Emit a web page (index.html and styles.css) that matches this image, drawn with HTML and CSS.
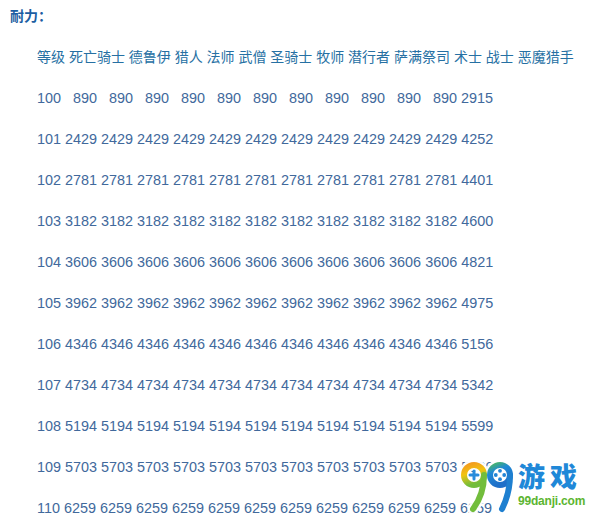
FILE: index.html
```html
<!DOCTYPE html>
<html lang="zh">
<head>
<meta charset="utf-8">
<link rel="stylesheet" href="styles.css">
</head>
<body>
<div class="page">
  <div class="title">耐力：</div>
  <div class="table">
    <div class="row head">等级 死亡骑士 德鲁伊 猎人 法师 武僧 圣骑士 牧师 潜行者 萨满祭司 术士 战士 恶魔猎手</div>
    <div class="row num">100   890   890   890   890   890   890   890   890   890   890   890 2915</div>
    <div class="row num">101 2429 2429 2429 2429 2429 2429 2429 2429 2429 2429 2429 4252</div>
    <div class="row num">102 2781 2781 2781 2781 2781 2781 2781 2781 2781 2781 2781 4401</div>
    <div class="row num">103 3182 3182 3182 3182 3182 3182 3182 3182 3182 3182 3182 4600</div>
    <div class="row num">104 3606 3606 3606 3606 3606 3606 3606 3606 3606 3606 3606 4821</div>
    <div class="row num">105 3962 3962 3962 3962 3962 3962 3962 3962 3962 3962 3962 4975</div>
    <div class="row num">106 4346 4346 4346 4346 4346 4346 4346 4346 4346 4346 4346 5156</div>
    <div class="row num">107 4734 4734 4734 4734 4734 4734 4734 4734 4734 4734 4734 5342</div>
    <div class="row num">108 5194 5194 5194 5194 5194 5194 5194 5194 5194 5194 5194 5599</div>
    <div class="row num">109 5703 5703 5703 5703 5703 5703 5703 5703 5703 5703 5703 5936</div>
    <div class="row num">110 6259 6259 6259 6259 6259 6259 6259 6259 6259 6259 6259 6259</div>
  </div>
  <div class="logo">
    <svg class="logo-mark" width="58" height="56" viewBox="0 0 58 56">
      <defs>
        <linearGradient id="g1" x1="0" y1="0" x2="0.3" y2="1">
          <stop offset="0" stop-color="#f39a1f"/>
          <stop offset="0.45" stop-color="#f2c40f"/>
          <stop offset="1" stop-color="#72bd3c"/>
        </linearGradient>
        <linearGradient id="g2" x1="0" y1="0" x2="0.4" y2="1">
          <stop offset="0" stop-color="#46b36c"/>
          <stop offset="0.35" stop-color="#1f8ad6"/>
          <stop offset="1" stop-color="#1e6fc8"/>
        </linearGradient>
      </defs>
      <g fill="none" stroke="#fff" stroke-width="11" stroke-linecap="round" opacity="0.95">
        <circle cx="15" cy="16" r="10"/>
        <path d="M25 16 C25 30 20 42 14 50"/>
        <circle cx="41" cy="16" r="10"/>
        <path d="M51 16 C51 30 47 42 43 50"/>
      </g>
      <g fill="none" stroke-width="6" stroke-linecap="round">
        <circle cx="15" cy="16" r="10" stroke="url(#g1)"/>
        <path d="M25 16 C25 30 20 42 14 50" stroke="#72bd3c"/>
        <circle cx="41" cy="16" r="10" stroke="url(#g2)"/>
        <path d="M51 16 C51 30 47 42 43 50" stroke="#1e7fd0"/>
      </g>
      <g stroke="#2a8cdb" stroke-width="3" stroke-linecap="round">
        <path d="M15 12 V20 M11 16 H19"/>
      </g>
      <g fill="#2285d6">
        <circle cx="41" cy="11.8" r="1.9"/>
        <circle cx="36.8" cy="16" r="1.9"/>
        <circle cx="45.2" cy="16" r="1.9"/>
        <circle cx="41" cy="20.2" r="1.9"/>
      </g>
    </svg>
    <div class="logo-text">
      <div class="logo-cn">游戏</div>
      <div class="logo-url">99danji.com</div>
    </div>
  </div>
</div>
</body>
</html>
```
FILE: styles.css
```css
html, body {
  margin: 0;
  padding: 0;
  background: #ffffff;
}
.page {
  position: relative;
  width: 600px;
  height: 525px;
  overflow: hidden;
  font-family: "Liberation Sans", "Noto Sans CJK SC", sans-serif;
}
.title {
  padding: 4px 0 0 10px;
  line-height: 24px;
  font-size: 14px;
  font-weight: bold;
  color: #1b5ea2;
}
.table {
  margin-top: 8.5px;
  padding-left: 37px;
}
.row {
  line-height: 41px;
  height: 41px;
  white-space: pre;
}
.head {
  font-size: 14px;
  color: #2670a3;
}
.num {
  font-size: 14.4px;
  color: #41699c;
}
.logo {
  position: absolute;
  left: 459px;
  top: 459px;
  display: flex;
  align-items: flex-start;
}
.logo-mark {
  display: block;
}
.logo-text {
  background: #ffffff;
  padding: 3px 2px 0 1px;
  display: flex;
  flex-direction: column;
  align-items: flex-start;
}
.logo-cn {
  font-family: "Noto Sans CJK SC", sans-serif;
  font-weight: 900;
  font-size: 27px;
  line-height: 28px;
  color: #1f88d8;
  letter-spacing: 5px;
}
.logo-url {
  margin-top: 4px;
  font-family: "Liberation Sans", sans-serif;
  font-weight: bold;
  font-size: 12px;
  line-height: 14px;
  letter-spacing: -0.2px;
  color: #5cb531;
}
```
